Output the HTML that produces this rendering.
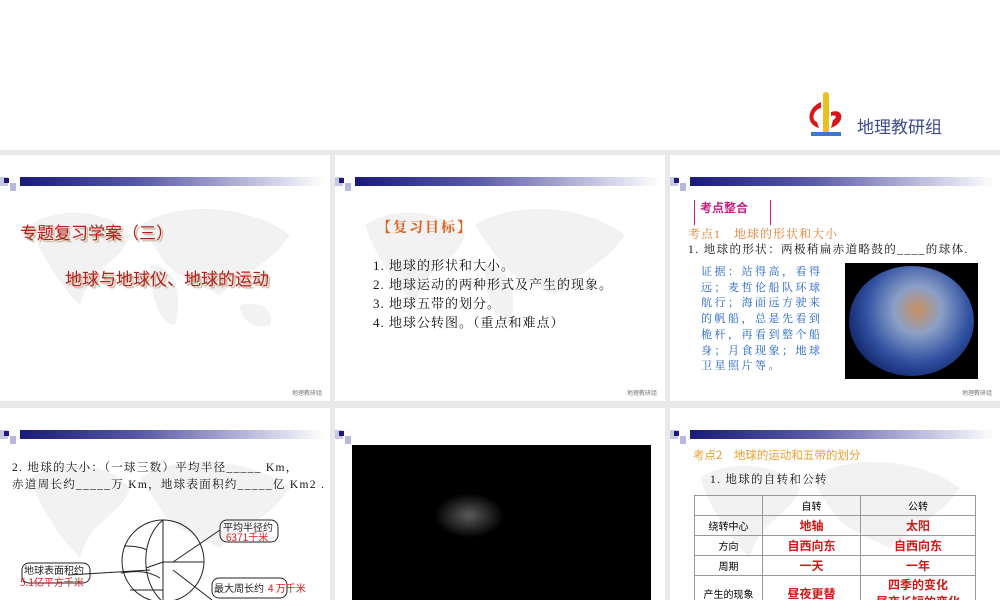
<!DOCTYPE html>
<html><head><meta charset="utf-8"><style>
body{margin:0;width:1000px;height:600px;background:#e9e9e9;position:relative;overflow:hidden;font-family:"Liberation Serif","Noto Serif CJK SC",serif}
.top{position:absolute;left:0;top:0;width:1000px;height:150px;background:#fff}
.s{position:absolute;background:#fff;overflow:hidden}
.bar{position:absolute;left:20px;top:22px;width:305px;height:9px;background:linear-gradient(90deg,#1a1a7a,#5a5aa6 40%,#c8c8e4 80%,#fff)}
.sq{position:absolute}
.map{position:absolute;left:20px;top:40px;width:280px;height:160px}
.map g{fill:#f2f2f2}
.ab{position:absolute;white-space:nowrap}
.lg{position:absolute;right:8px;bottom:4px;font-size:6px;color:#777;font-family:"Noto Sans CJK SC",sans-serif}
table{border-collapse:collapse;font-family:"Noto Sans CJK SC",sans-serif;font-size:10px}
td{border:1px solid #999;text-align:center;height:19px;padding:0}
.r{color:#d01818;font-weight:bold;font-size:12px}
</style></head><body>
<div class="top">
 <svg style="position:absolute;left:803px;top:90px" width="50" height="50" viewBox="0 0 50 50">
  <rect x="20" y="4" width="6" height="40" fill="#e8c020"/><circle cx="23" cy="5" r="3" fill="#e8c020"/>
  <path d="M18 12 C4 18 2 34 16 38 L14 32 C8 30 10 20 18 18Z" fill="#d81818"/>
  <path d="M28 22 C40 18 42 30 32 36 L28 38 L30 30 C34 28 34 24 28 26Z" fill="#d81818"/>
  <rect x="8" y="42" width="30" height="4" fill="#3a7ac8"/>
 </svg>
 <div class="ab" style="left:857px;top:113px;font-size:17px;color:#3a4a8a;font-family:'Noto Sans CJK SC',sans-serif">地理教研组</div>
</div>

<div class="s" style="left:0;top:155px;width:330px;height:246px">
 <div class="sq" style="left:0;top:22px;width:8px;height:9px;background:#c8c8e4"></div><div class="sq" style="left:4px;top:23px;width:5px;height:5px;background:#1a1a7a"></div><div class="sq" style="left:10px;top:28px;width:6px;height:8px;background:#b8b8dc"></div>
 <div class="bar"></div>
 <svg class="map" viewBox="0 0 280 160"><g><path d="M10 30 C40 10 90 15 110 40 C100 70 70 70 60 110 C40 90 20 60 10 30Z"/><path d="M120 30 C160 5 230 10 270 40 C250 70 220 80 200 100 C180 90 150 80 140 60Z"/><path d="M130 70 C150 70 165 90 155 130 C140 130 130 100 130 70Z"/><path d="M220 110 C240 105 255 115 250 130 C235 135 220 125 220 110Z"/></g></svg>
 <div class="ab" style="left:20px;top:64px;font-size:17px;color:#b02020;text-shadow:2px 2px 1px #c8b090;font-family:'Noto Sans CJK SC',sans-serif">专题复习学案（三）</div>
 <div class="ab" style="left:65px;top:110px;font-size:17px;color:#b02020;text-shadow:2px 2px 1px #c8b090;font-family:'Noto Sans CJK SC',sans-serif">地球与地球仪、地球的运动</div>
 <div class="lg">地理教研组</div>
</div>

<div class="s" style="left:335px;top:155px;width:330px;height:246px">
 <div class="sq" style="left:0;top:22px;width:8px;height:9px;background:#c8c8e4"></div><div class="sq" style="left:4px;top:23px;width:5px;height:5px;background:#1a1a7a"></div><div class="sq" style="left:10px;top:28px;width:6px;height:8px;background:#b8b8dc"></div>
 <div class="bar"></div>
 <svg class="map" viewBox="0 0 280 160"><g><path d="M10 30 C40 10 90 15 110 40 C100 70 70 70 60 110 C40 90 20 60 10 30Z"/><path d="M120 30 C160 5 230 10 270 40 C250 70 220 80 200 100 C180 90 150 80 140 60Z"/><path d="M130 70 C150 70 165 90 155 130 C140 130 130 100 130 70Z"/></g></svg>
 <div class="ab" style="left:42px;top:62px;font-size:14px;letter-spacing:2px;color:#e06020;font-weight:bold">【复习目标】</div>
 <div class="ab" style="left:38px;top:101px;font-size:13px;letter-spacing:1px;line-height:19px;color:#111">1. 地球的形状和大小。<br>2. 地球运动的两种形式及产生的现象。<br>3. 地球五带的划分。<br>4. 地球公转图。（重点和难点）</div>
 <div class="lg">地理教研组</div>
</div>

<div class="s" style="left:670px;top:155px;width:330px;height:246px">
 <div class="sq" style="left:0;top:22px;width:8px;height:9px;background:#c8c8e4"></div><div class="sq" style="left:4px;top:23px;width:5px;height:5px;background:#1a1a7a"></div><div class="sq" style="left:10px;top:28px;width:6px;height:8px;background:#b8b8dc"></div>
 <div class="bar"></div>
 <div class="ab" style="left:24px;top:45px;width:1px;height:25px;background:#c02080"></div>
 <div class="ab" style="left:100px;top:45px;width:1px;height:25px;background:#c02080"></div>
 <div class="ab" style="left:30px;top:44px;font-size:12px;color:#c02080;font-weight:bold;font-family:'Noto Sans CJK SC',sans-serif">考点整合</div>
 <div class="ab" style="left:18px;top:70px;font-size:12px;letter-spacing:1px;color:#e08030">考点1　地球的形状和大小</div>
 <div class="ab" style="left:18px;top:86px;font-size:11.5px;letter-spacing:1.4px;color:#111">1. 地球的形状：两极稍扁赤道略鼓的____的球体.</div>
 <div class="ab" style="left:31px;top:110px;font-size:11px;letter-spacing:2.5px;line-height:15.7px;color:#2060c8;white-space:normal;width:122px">证据：站得高，看得远；麦哲伦船队环球航行；海面远方驶来的帆船，总是先看到桅杆，再看到整个船身；月食现象；地球卫星照片等。</div>
 <div class="ab" style="left:175px;top:108px;width:133px;height:116px;background:#000"><div style="position:absolute;left:4px;top:3px;width:125px;height:110px;border-radius:50%;background:radial-gradient(circle at 55% 40%,#c89060 0,#8aa0c8 25%,#3050a0 55%,#102060 80%)"></div></div>
 <div class="lg">地理教研组</div>
</div>

<div class="s" style="left:0;top:408px;width:330px;height:192px">
 <div class="sq" style="left:0;top:22px;width:8px;height:9px;background:#c8c8e4"></div><div class="sq" style="left:4px;top:23px;width:5px;height:5px;background:#1a1a7a"></div><div class="sq" style="left:10px;top:28px;width:6px;height:8px;background:#b8b8dc"></div>
 <div class="bar"></div>
 <svg class="map" viewBox="0 0 280 160"><g><path d="M10 30 C40 10 90 15 110 40 C100 70 70 70 60 110 C40 90 20 60 10 30Z"/><path d="M120 30 C160 5 230 10 270 40 C250 70 220 80 200 100 C180 90 150 80 140 60Z"/></g></svg>
 <div class="ab" style="left:12px;top:52px;font-size:11.5px;letter-spacing:1.3px;line-height:17px;color:#111">2. 地球的大小：（一球三数）平均半径_____ Km，<br>赤道周长约_____万 Km，地球表面积约_____亿 Km2 .</div>
 <svg style="position:absolute;left:0;top:100px" width="330" height="92" viewBox="0 0 330 92">
  <g fill="none" stroke="#222" stroke-width="1">
   <circle cx="163" cy="53" r="41"/>
   <path d="M163 12 C140 30 140 75 163 94"/><path d="M163 12 V94"/><path d="M163 54 L204 54"/><path d="M163 54 L146 60"/>
   <path d="M124 38 C135 38 145 40 146 42"/><path d="M121 65 C140 62 150 64 160 70"/><path d="M130 82 L163 82"/>
   <path d="M173 54 L220 22"/><path d="M173 62 L212 92"/><path d="M68 67 L150 62"/>
   <rect x="220" y="12" width="58" height="22" rx="7"/><rect x="22" y="55" width="68" height="20" rx="7"/><rect x="212" y="70" width="75" height="20" rx="7"/>
  </g>
  <g font-family="Noto Sans CJK SC,sans-serif" font-size="10">
   <text x="223" y="23" fill="#222">平均半径约</text><text x="226" y="33" fill="#e01818">6371千米</text>
   <text x="24" y="66" fill="#222">地球表面积约</text><text x="20" y="78" fill="#e01818">5.1亿平方千米</text>
   <text x="214" y="84" fill="#222">最大周长约</text><text x="268" y="84" fill="#e01818">4 万千米</text>
  </g>
 </svg>
</div>

<div class="s" style="left:335px;top:408px;width:330px;height:192px">
 <div class="sq" style="left:0;top:22px;width:8px;height:9px;background:#c8c8e4"></div><div class="sq" style="left:4px;top:23px;width:5px;height:5px;background:#1a1a7a"></div><div class="sq" style="left:10px;top:28px;width:6px;height:8px;background:#b8b8dc"></div>
 <div class="ab" style="left:17px;top:37px;width:299px;height:160px;background:#000"><div style="position:absolute;left:82px;top:48px;width:70px;height:45px;border-radius:50%;background:radial-gradient(ellipse,#5a5a5a,#000 70%)"></div></div>
</div>

<div class="s" style="left:670px;top:408px;width:330px;height:192px">
 <div class="sq" style="left:0;top:22px;width:8px;height:9px;background:#c8c8e4"></div><div class="sq" style="left:4px;top:23px;width:5px;height:5px;background:#1a1a7a"></div><div class="sq" style="left:10px;top:28px;width:6px;height:8px;background:#b8b8dc"></div>
 <div class="bar"></div>
 <svg class="map" viewBox="0 0 280 160"><g><path d="M10 30 C40 10 90 15 110 40 C100 70 70 70 60 110 C40 90 20 60 10 30Z"/><path d="M120 30 C160 5 230 10 270 40 C250 70 220 80 200 100 C180 90 150 80 140 60Z"/></g></svg>
 <div class="ab" style="left:23px;top:39px;font-size:11.5px;color:#e8a030;font-family:'Noto Sans CJK SC',sans-serif">考点2　地球的运动和五带的划分</div>
 <div class="ab" style="left:40px;top:63px;font-size:11.5px;letter-spacing:1.3px;color:#111">1. 地球的自转和公转</div>
 <table style="position:absolute;left:24px;top:87px;width:282px">
  <tr><td style="width:67px"></td><td style="width:97px">自转</td><td>公转</td></tr>
  <tr><td>绕转中心</td><td class="r">地轴</td><td class="r">太阳</td></tr>
  <tr><td>方向</td><td class="r">自西向东</td><td class="r">自西向东</td></tr>
  <tr><td>周期</td><td class="r">一天</td><td class="r">一年</td></tr>
  <tr><td style="height:34px">产生的现象</td><td class="r">昼夜更替</td><td class="r">四季的变化<br>昼夜长短的变化</td></tr>
 </table>
</div>
</body></html>
